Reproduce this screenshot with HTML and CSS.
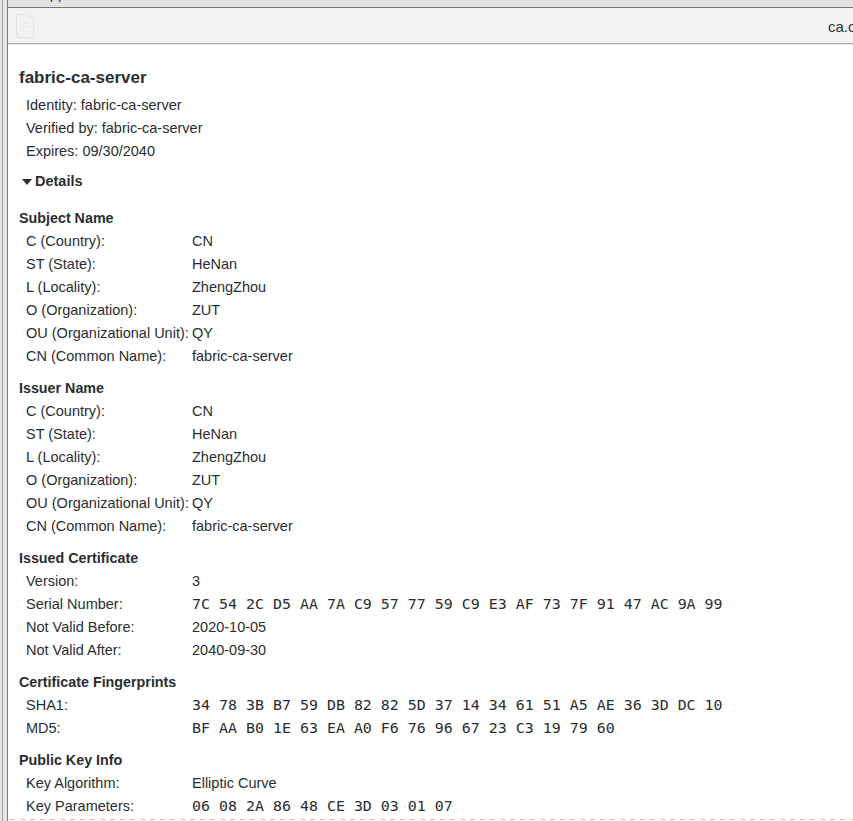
FILE: index.html
```html
<!DOCTYPE html>
<html>
<head>
<meta charset="utf-8">
<title>Certificate Viewer</title>
<link rel="stylesheet" href="styles.css">
</head>
<body>
<div class="desk">
  <div class="frame-edge"></div>
  <div class="window-col">
    <div class="topband"><span class="topband-text">Applications</span></div>
    <div class="toolbar">
      <svg class="doc-icon" width="20" height="26" viewBox="0 0 20 26">
        <path d="M2.5 1.5h11l5 5v17a1 1 0 0 1-1 1h-15a1 1 0 0 1-1-1v-21a1 1 0 0 1 1-1z" fill="none" stroke="#e2e2e2" stroke-width="1"/>
        <path d="M5 10h10M5 14h10M5 18h10" stroke="#e8e8e8" stroke-width="1"/>
      </svg>
      <span class="doc-title">ca.crt</span>
    </div>
    <div class="content">
      <div class="title">fabric-ca-server</div>
      <div class="info">
        <div>Identity: fabric-ca-server</div>
        <div>Verified by: fabric-ca-server</div>
        <div>Expires: 09/30/2040</div>
      </div>
      <div class="details"><span class="tri"></span>Details</div>

      <div class="section first">
        <div class="sec-head">Subject Name</div>
        <div class="rows">
          <div>C (Country):</div><div>CN</div>
          <div>ST (State):</div><div>HeNan</div>
          <div>L (Locality):</div><div>ZhengZhou</div>
          <div>O (Organization):</div><div>ZUT</div>
          <div>OU (Organizational Unit):</div><div>QY</div>
          <div>CN (Common Name):</div><div>fabric-ca-server</div>
        </div>
      </div>

      <div class="section">
        <div class="sec-head">Issuer Name</div>
        <div class="rows">
          <div>C (Country):</div><div>CN</div>
          <div>ST (State):</div><div>HeNan</div>
          <div>L (Locality):</div><div>ZhengZhou</div>
          <div>O (Organization):</div><div>ZUT</div>
          <div>OU (Organizational Unit):</div><div>QY</div>
          <div>CN (Common Name):</div><div>fabric-ca-server</div>
        </div>
      </div>

      <div class="section">
        <div class="sec-head">Issued Certificate</div>
        <div class="rows">
          <div>Version:</div><div>3</div>
          <div>Serial Number:</div><div class="mono">7C 54 2C D5 AA 7A C9 57 77 59 C9 E3 AF 73 7F 91 47 AC 9A 99</div>
          <div>Not Valid Before:</div><div>2020-10-05</div>
          <div>Not Valid After:</div><div>2040-09-30</div>
        </div>
      </div>

      <div class="section">
        <div class="sec-head">Certificate Fingerprints</div>
        <div class="rows">
          <div>SHA1:</div><div class="mono">34 78 3B B7 59 DB 82 82 5D 37 14 34 61 51 A5 AE 36 3D DC 10</div>
          <div>MD5:</div><div class="mono">BF AA B0 1E 63 EA A0 F6 76 96 67 23 C3 19 79 60</div>
        </div>
      </div>

      <div class="section">
        <div class="sec-head">Public Key Info</div>
        <div class="rows">
          <div>Key Algorithm:</div><div>Elliptic Curve</div>
          <div>Key Parameters:</div><div class="mono">06 08 2A 86 48 CE 3D 03 01 07</div>
        </div>
      </div>
      <div class="dashline"></div>
    </div>
  </div>
</div>
</body>
</html>
```

FILE: styles.css
```css
html, body {
  margin: 0;
  padding: 0;
}

body {
  width: 853px;
  height: 821px;
  overflow: hidden;
  background: #e4e4e4;
  font-family: "Liberation Sans", Arial, sans-serif;
  font-size: 14.5px;
  color: #2a2e30;
}

.desk {
  display: flex;
  height: 821px;
}

.frame-edge {
  width: 7px;
  flex: none;
  background: linear-gradient(to right, #e6e6e6 2px, #9c9c9c 2px, #9c9c9c 3px, #e6e6e6 3px);
  border-right: 1px solid #7c7c7c;
}

.window-col {
  flex: 1;
  min-width: 0;
  display: flex;
  flex-direction: column;
  overflow: hidden;
}

.topband {
  height: 7px;
  flex: none;
  background: #e2e2e2;
  border-bottom: 1px solid #777;
  overflow: hidden;
  padding-left: 32px;
}

.topband-text {
  display: block;
  margin-top: -13px;
  line-height: 14px;
  font-size: 14.67px;
  color: #333;
  white-space: nowrap;
}

.toolbar {
  height: 35px;
  flex: none;
  background: #f2f2f2;
  border-bottom: 1px solid #b0b0b0;
  display: flex;
  align-items: center;
  white-space: nowrap;
}

.doc-icon {
  margin-left: 7px;
  flex: none;
}

.doc-title {
  margin-left: 793px;
  font-size: 15px;
  color: #333;
  padding-top: 2px;
}

.content {
  flex: 1;
  background: #fff;
  padding: 22px 0 0 11px;
  line-height: 23px;
  box-shadow: inset 0 1px 0 #e6e6e6;
}

.title {
  font-size: 17px;
  font-weight: bold;
  line-height: 24px;
  margin-bottom: 4px;
}

.info {
  padding-left: 7px;
}

.details {
  margin-top: 7px;
  font-weight: bold;
  display: flex;
  align-items: center;
}

.tri {
  width: 0;
  height: 0;
  border-left: 5px solid transparent;
  border-right: 5px solid transparent;
  border-top: 6px solid #2a2e30;
  margin-left: 3px;
  margin-right: 3px;
}

.section {
  margin-top: 9px;
}

.section.first {
  margin-top: 14px;
}

.sec-head {
  font-weight: bold;
  font-size: 14.3px;
}

.rows {
  display: grid;
  grid-template-columns: 166px auto;
  padding-left: 7px;
}

.mono {
  font-family: "DejaVu Sans Mono", monospace;
  font-size: 14.95px;
}

.dashline {
  height: 1px;
  margin-top: 1px;
  margin-left: -9px;
  background-image: repeating-linear-gradient(to right, #c4c4c4 0, #c4c4c4 5px, transparent 5px, transparent 10px);
}
```
